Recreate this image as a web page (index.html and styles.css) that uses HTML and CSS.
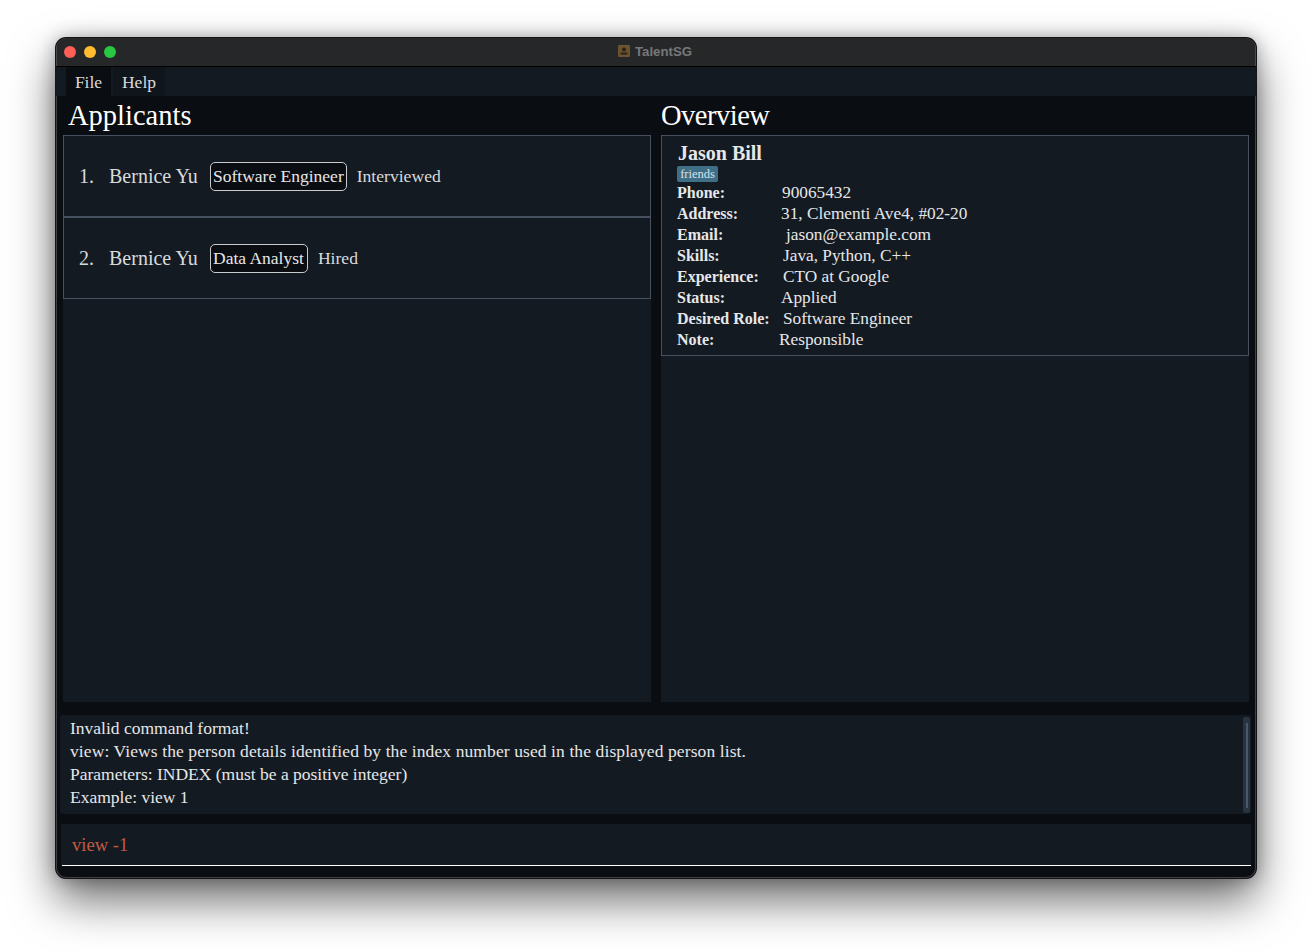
FILE: index.html
```html
<!DOCTYPE html>
<html lang="en">

<head>
    <meta charset="UTF-8">
    <title>TalentSG</title>
    <link rel="stylesheet" href="styles.css">
</head>

<body>
<div class="window">
    <!-- title bar -->
    <div class="titlebar">
        <div class="lights">
            <span class="light red"></span>
            <span class="light yellow"></span>
            <span class="light green"></span>
        </div>
        <div class="title">
            <svg class="app-icon" width="12" height="12" viewBox="0 0 12 12">
                <rect width="12" height="12" rx="1" fill="#6b5230"/>
                <circle cx="6" cy="4.6" r="2" fill="#2c2318"/>
                <rect x="2.5" y="7.6" width="7" height="1.9" fill="#2c2318"/>
            </svg>
            <span>TalentSG</span>
        </div>
    </div>

    <!-- menu -->
    <div class="menubar">
        <a href="#" class="menu-item menu-file">File</a>
        <a href="#" class="menu-item menu-help">Help</a>
    </div>

    <!-- the two panes -->
    <div class="panes">
        <section class="pane">
            <h2 class="pane-title applicants-title">Applicants</h2>
            <div class="pane-body">
                <ul class="applicants">
                    <li class="applicant">
                        <span class="index">1.</span>
                        <span class="name">Bernice Yu</span>
                        <span class="role">Software Engineer</span>
                        <span class="status">Interviewed</span>
                    </li>
                    <li class="applicant">
                        <span class="index">2.</span>
                        <span class="name">Bernice Yu</span>
                        <span class="role role-short">Data Analyst</span>
                        <span class="status">Hired</span>
                    </li>
                </ul>
            </div>
        </section>

        <section class="pane">
            <h2 class="pane-title overview-title">Overview</h2>
            <div class="pane-body">
                <div class="details">
                    <div class="details-name">Jason Bill</div>
                    <div class="tags"><span class="tag">friends</span></div>
                    <div class="row"><b>Phone:</b><span class="nudge-3">90065432</span></div>
                    <div class="row"><b>Address:</b><span class="nudge-2">31, Clementi Ave4, #02-20</span></div>
                    <div class="row"><b>Email:</b><span class="nudge-7">jason@example.com</span></div>
                    <div class="row"><b>Skills:</b><span class="nudge-4">Java, Python, C++</span></div>
                    <div class="row"><b>Experience:</b><span class="nudge-4">CTO at Google</span></div>
                    <div class="row"><b>Status:</b><span class="nudge-2">Applied</span></div>
                    <div class="row"><b>Desired Role:</b><span class="nudge-4">Software Engineer</span></div>
                    <div class="row"><b>Note:</b><span>Responsible</span></div>
                </div>
            </div>
        </section>
    </div>

    <!-- command result -->
    <div class="result">
        <div class="result-text">
            <p>Invalid command format!</p>
            <p class="long-line">view: Views the person details identified by the index number used in the displayed person list.</p>
            <p>Parameters: INDEX (must be a positive integer)</p>
            <p>Example: view 1</p>
        </div>
        <div class="scrollbar"><div class="thumb"></div></div>
    </div>

    <!-- command box -->
    <div class="command">
        <div class="command-input">view -1</div>
    </div>
</div>
</body>

</html>
```

FILE: styles.css
```css
* {
    padding: 0;
    margin: 0;
    box-sizing: border-box;
}

ul {
    list-style: none;
}

a {
    text-decoration: none;
}

body {
    width: 1312px;
    height: 952px;
    padding: 38px 56px 74px;
    background-color: #fff;
    font-family: "Liberation Serif", "DejaVu Serif", serif;
    overflow: hidden;
}

.window {
    display: flex;
    flex-direction: column;
    width: 1200px;
    height: 840px;
    background-color: #0a0d12;
    border-radius: 10px;
    overflow: hidden;
    box-shadow: inset 0 0 0 1px #3e4044, 0 0 0 1px #141416, 0 22px 46px rgba(0, 0, 0, .58), 0 0 18px rgba(0, 0, 0, .32);
}

.titlebar {
    display: grid;
    grid-template-columns: 1fr auto 1fr;
    align-items: center;
    height: 29px;
    flex: none;
    padding-left: 8px;
    background-color: #262729;
    border-bottom: 1px solid #000;
    box-shadow: inset -1px 0 0 #4a4b4e, inset 1px 0 0 #4a4b4e;
}

.lights {
    display: flex;
    gap: 8px;
}

.light {
    width: 12px;
    height: 12px;
    border-radius: 50%;
}

.red {
    background-color: #ff5f57;
}

.yellow {
    background-color: #febc2e;
}

.green {
    background-color: #28c840;
}

.title {
    display: flex;
    align-items: center;
    gap: 5px;
    padding: 0 10px 2px 0;
    font-family: "Liberation Sans", sans-serif;
    font-size: 13.2px;
    font-weight: bold;
    color: #77787a;
}

.menubar {
    display: flex;
    flex: none;
    height: 29px;
    padding-left: 10px;
    gap: 2px;
    background-color: #141a21;
}

.menu-item {
    display: flex;
    align-items: center;
    justify-content: center;
    padding-top: 2px;
    background-color: #0a0d12;
    color: #d9dadc;
    font-size: 17.5px;
}

.menu-file {
    width: 45px;
}

.menu-help {
    width: 52px;
    background-color: #10151c;
}

.panes {
    display: flex;
    gap: 10px;
    height: 606px;
    flex: none;
    padding: 0 7px;
}

.pane {
    display: flex;
    flex-direction: column;
    width: 588px;
}

.pane-title {
    height: 39px;
    padding-top: 3px;
    color: #fff;
    font-size: 28.5px;
    font-weight: normal;
    line-height: 34px;
}

.applicants-title {
    padding-left: 5px;
}

.overview-title {
    letter-spacing: -.5px;
}

.pane-body {
    height: 567px;
    background-color: #141a21;
}

.applicant {
    display: flex;
    align-items: center;
    height: 82px;
    padding: 1px 0 0 15px;
    border: 1px solid #46505f;
    color: #d9dadc;
    font-size: 20px;
}

.index {
    width: 30px;
}

.name {
    width: 101px;
}

.role {
    height: 29px;
    padding: 0 2px;
    line-height: 27px;
    background-color: #0a0d12;
    border: 1px solid #c8cacc;
    border-radius: 5px;
    color: #e6e7e9;
    font-size: 17.5px;
}

.role-short {
    padding-right: 3px;
}

.status {
    margin-left: 10px;
    font-size: 17.6px;
}

.details {
    height: 221px;
    padding: 5px 0 0 15px;
    border: 1px solid #46505f;
    color: #e6e7e9;
    font-size: 17.3px;
}

.details-name {
    height: 23px;
    padding-left: 1px;
    font-size: 20px;
    font-weight: bold;
    line-height: 24px;
}

.tags {
    display: flex;
    height: 18px;
    padding-top: 2px;
}

.tag {
    width: 41px;
    height: 16px;
    background-color: #3e6f87;
    border-radius: 2px;
    color: #d9e2e8;
    font-size: 12.5px;
    line-height: 16px;
    text-align: center;
}

.row {
    display: grid;
    grid-template-columns: 102px 1fr;
    height: 21px;
    line-height: 21px;
}

.row b {
    font-size: 16px;
}

.nudge-2 {
    padding-left: 2px;
}

.nudge-3 {
    padding-left: 3px;
}

.nudge-4 {
    padding-left: 4px;
}

.nudge-7 {
    padding-left: 7px;
}

.result {
    display: flex;
    justify-content: space-between;
    flex: none;
    height: 99px;
    margin: 13px 5px 0 4px;
    padding: 2px 1px 1px 10px;
    background-color: #141a21;
    border-radius: 3px;
    color: #e6e7e9;
    font-size: 17.5px;
}

.result-text p {
    height: 23px;
    line-height: 23px;
}

.long-line {
    letter-spacing: .1px;
}

.scrollbar {
    display: flex;
    justify-content: center;
    width: 7px;
    padding: 6px 0;
    background-color: #263340;
    border-radius: 2px;
}

.thumb {
    width: 2px;
    height: 85px;
    background-color: #46586a;
}

.command {
    flex: none;
    height: 42px;
    margin: 10px 5px 0;
    background-color: #141a21;
}

.command-input {
    height: 42px;
    margin-left: 1px;
    padding-left: 10px;
    border-bottom: 1px solid #fff;
    color: #c05a45;
    font-size: 18.6px;
    line-height: 41px;
}
```
